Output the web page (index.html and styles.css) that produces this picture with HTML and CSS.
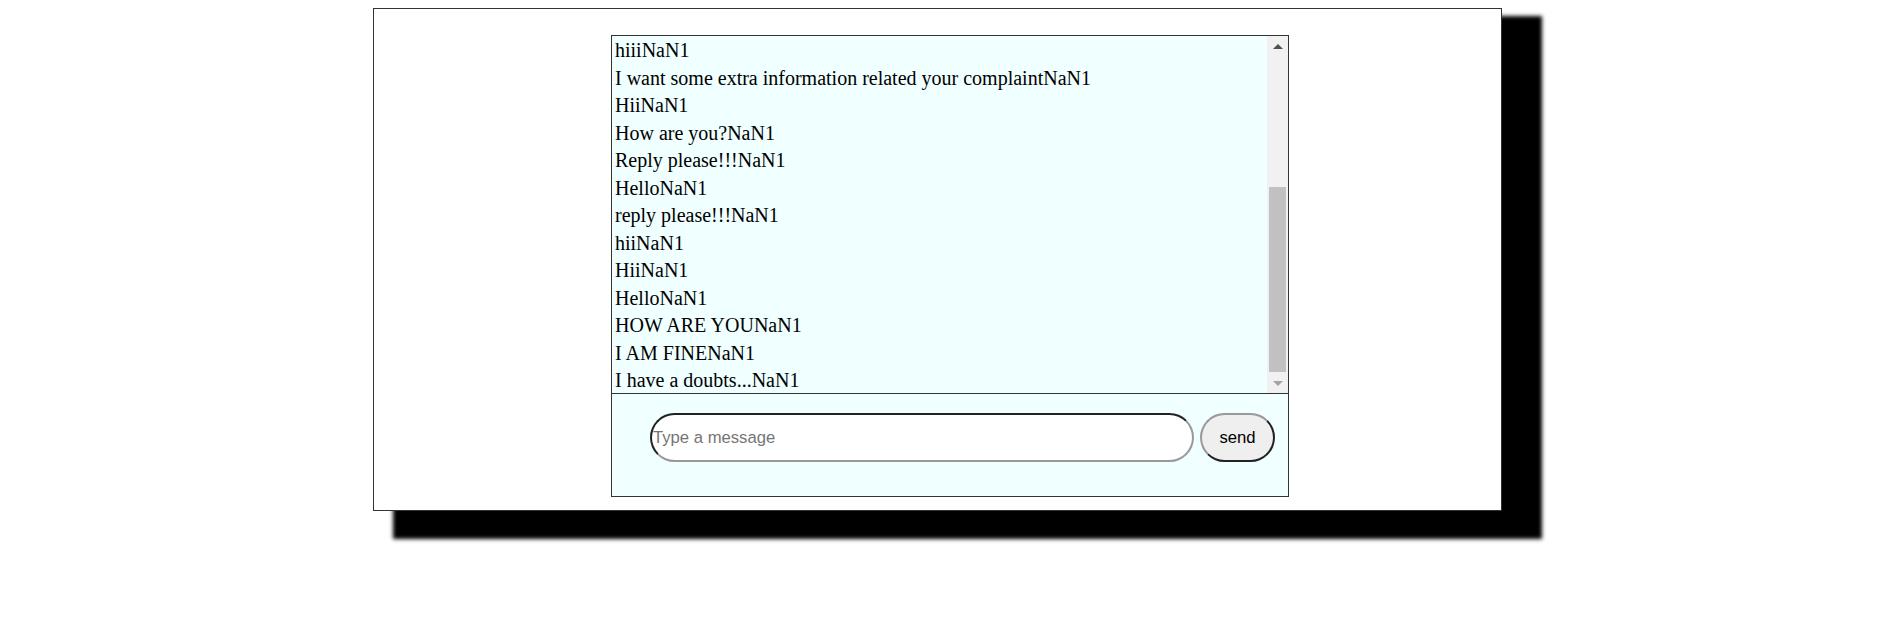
FILE: index.html
```html
<!DOCTYPE html>
<html lang="en">
<head>
<meta charset="utf-8">
<title>Chat</title>
<link rel="stylesheet" href="styles.css">
</head>
<body>
<div class="panel">
  <div class="chat">
    <div class="messages">
      <div class="list">
        <div class="msg">hiiiNaN1</div>
        <div class="msg">I want some extra information related your complaintNaN1</div>
        <div class="msg">HiiNaN1</div>
        <div class="msg">How are you?NaN1</div>
        <div class="msg">Reply please!!!NaN1</div>
        <div class="msg">HelloNaN1</div>
        <div class="msg">reply please!!!NaN1</div>
        <div class="msg">hiiNaN1</div>
        <div class="msg">HiiNaN1</div>
        <div class="msg">HelloNaN1</div>
        <div class="msg">HOW ARE YOUNaN1</div>
        <div class="msg">I AM FINENaN1</div>
        <div class="msg">I have a doubts...NaN1</div>
      </div>
      <div class="scrollbar">
        <div class="arrow">
          <svg width="10" height="5" viewBox="0 0 10 5"><polygon points="0,5 5,0 10,5" fill="#505050"/></svg>
        </div>
        <div class="track"><div class="thumb"></div></div>
        <div class="arrow arrow-down">
          <svg width="10" height="5" viewBox="0 0 10 5"><polygon points="0,0 10,0 5,5" fill="#a3a3a3"/></svg>
        </div>
      </div>
    </div>
    <div class="composer">
      <input class="field" type="text" placeholder="Type a message">
      <button class="send" type="button">send</button>
    </div>
  </div>
</div>
</body>
</html>
```
FILE: styles.css
```css
html, body {
  margin: 0;
  background: #ffffff;
}
body {
  padding: 8px 0 0 373px;
  height: 630px;
  box-sizing: border-box;
  overflow: hidden;
}
.panel {
  border: 1px solid #333;
  background: #fff;
  box-sizing: border-box;
  width: 1129px;
  height: 503px;
  padding: 26px 0 0 237px;
  box-shadow: 30px 18px 4px 10px #000;
}
.chat {
  width: 678px;
  height: 462px;
  box-sizing: border-box;
  border: 1px solid #333;
  background: #f0ffff;
  display: flex;
  flex-direction: column;
}
.messages {
  height: 358px;
  box-sizing: border-box;
  border-bottom: 1px solid #333;
  display: flex;
  overflow: hidden;
}
.list {
  flex: 1;
  padding-left: 3px;
  padding-top: 1px;
  overflow: hidden;
  display: flex;
  flex-direction: column;
  justify-content: flex-start;
}
.msg {
  font-family: "Liberation Serif", "Times New Roman", serif;
  font-size: 20px;
  line-height: 27.5px;
  color: #000;
  white-space: nowrap;
  flex: none;
}
.scrollbar {
  width: 21px;
  flex: none;
  background: #f1f1f1;
  display: flex;
  flex-direction: column;
}
.arrow {
  height: 21px;
  flex: none;
  display: flex;
  justify-content: center;
  align-items: flex-start;
  padding-top: 8px;
  box-sizing: border-box;
}
.arrow svg {
  display: block;
}
.arrow-down {
  padding-top: 9px;
}
.track {
  flex: 1;
  display: flex;
  flex-direction: column;
  justify-content: flex-end;
  padding: 0 2px;
}
.thumb {
  height: 185px;
  background: #c1c1c1;
}
.composer {
  flex: 1;
  display: flex;
  align-items: flex-start;
  padding: 19px 13px 0 38px;
  gap: 6px;
}
.field {
  width: 544px;
  height: 49px;
  box-sizing: border-box;
  margin: 0;
  padding: 0 1px;
  border-radius: 25px;
  border-width: 2px;
  border-style: solid;
  border-color: #222 #999 #999 #222;
  background: #fff;
  font-family: "Liberation Sans", Arial, sans-serif;
  font-size: 16.67px;
  color: #000;
  outline: none;
}
.field::placeholder {
  color: #757575;
}
.send {
  width: 75px;
  height: 49px;
  box-sizing: border-box;
  margin: 0;
  padding: 0;
  border-radius: 25px;
  border-width: 2px;
  border-style: solid;
  border-color: #999 #222 #222 #999;
  background: #efefef;
  font-family: "Liberation Sans", Arial, sans-serif;
  font-size: 16.67px;
  color: #000;
}
```
